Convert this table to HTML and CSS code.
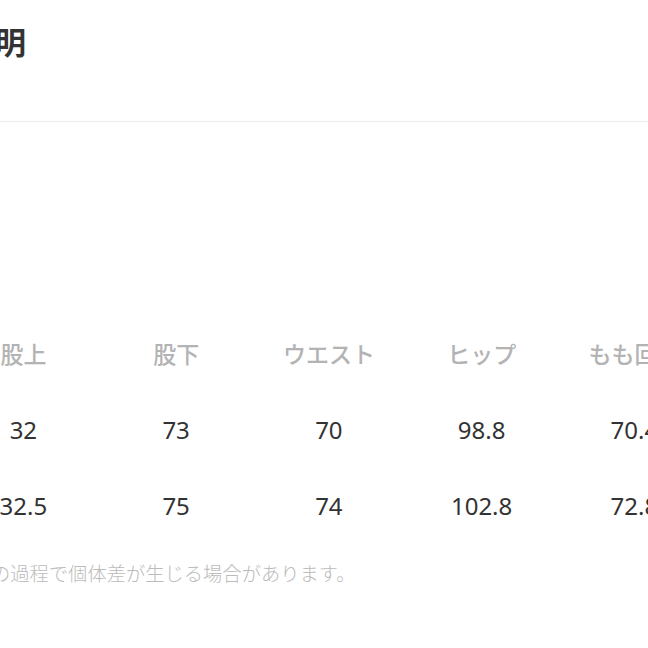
FILE: index.html
```html
<!DOCTYPE html>
<html lang="ja">
<head>
<meta charset="utf-8">
<link rel="stylesheet" href="styles.css">
</head>
<body>
<div class="page">
  <h2 class="title">説明</h2>
  <div class="divider"></div>
  <div class="table">
    <div class="th">股上</div><div class="th">股下</div><div class="th">ウエスト</div><div class="th">ヒップ</div><div class="th">もも回り</div>
    <div class="td">32</div><div class="td">73</div><div class="td">70</div><div class="td">98.8</div><div class="td">70.4</div>
    <div class="td">32.5</div><div class="td">75</div><div class="td">74</div><div class="td">102.8</div><div class="td">72.8</div>
  </div>
  <p class="note">の過程で個体差が生じる場合があります。</p>
</div>
</body>
</html>
```
FILE: styles.css
```css
html, body {
  margin: 0;
  padding: 0;
  background: #ffffff;
  overflow: hidden;
}
body {
  width: 648px;
  height: 648px;
  font-family: "Noto Sans", "Noto Sans CJK JP", sans-serif;
}
.page {
  margin-left: -53px;
  width: 760px;
}
.title {
  margin: 22px 0 0 0;
  padding-left: 17px;
  font-size: 31px;
  line-height: 40px;
  font-weight: 700;
  color: #333333;
}
.divider {
  margin-top: 59px;
  height: 1px;
  background: #ececec;
}
.table {
  margin-top: 193px;
  display: grid;
  grid-template-columns: repeat(5, 152.75px);
  grid-auto-rows: 76px;
}
.th, .td {
  display: flex;
  align-items: center;
  justify-content: center;
  white-space: nowrap;
}
.th {
  font-size: 23px;
  font-weight: 500;
  color: #b3b3b3;
}
.td {
  font-size: 24px;
  color: #333333;
}
.note {
  margin: 19px 0 0 0;
  padding-left: 44px;
  font-size: 19.3px;
  line-height: 24px;
  font-weight: 300;
  color: #bbbbbb;
  white-space: nowrap;
}
```
